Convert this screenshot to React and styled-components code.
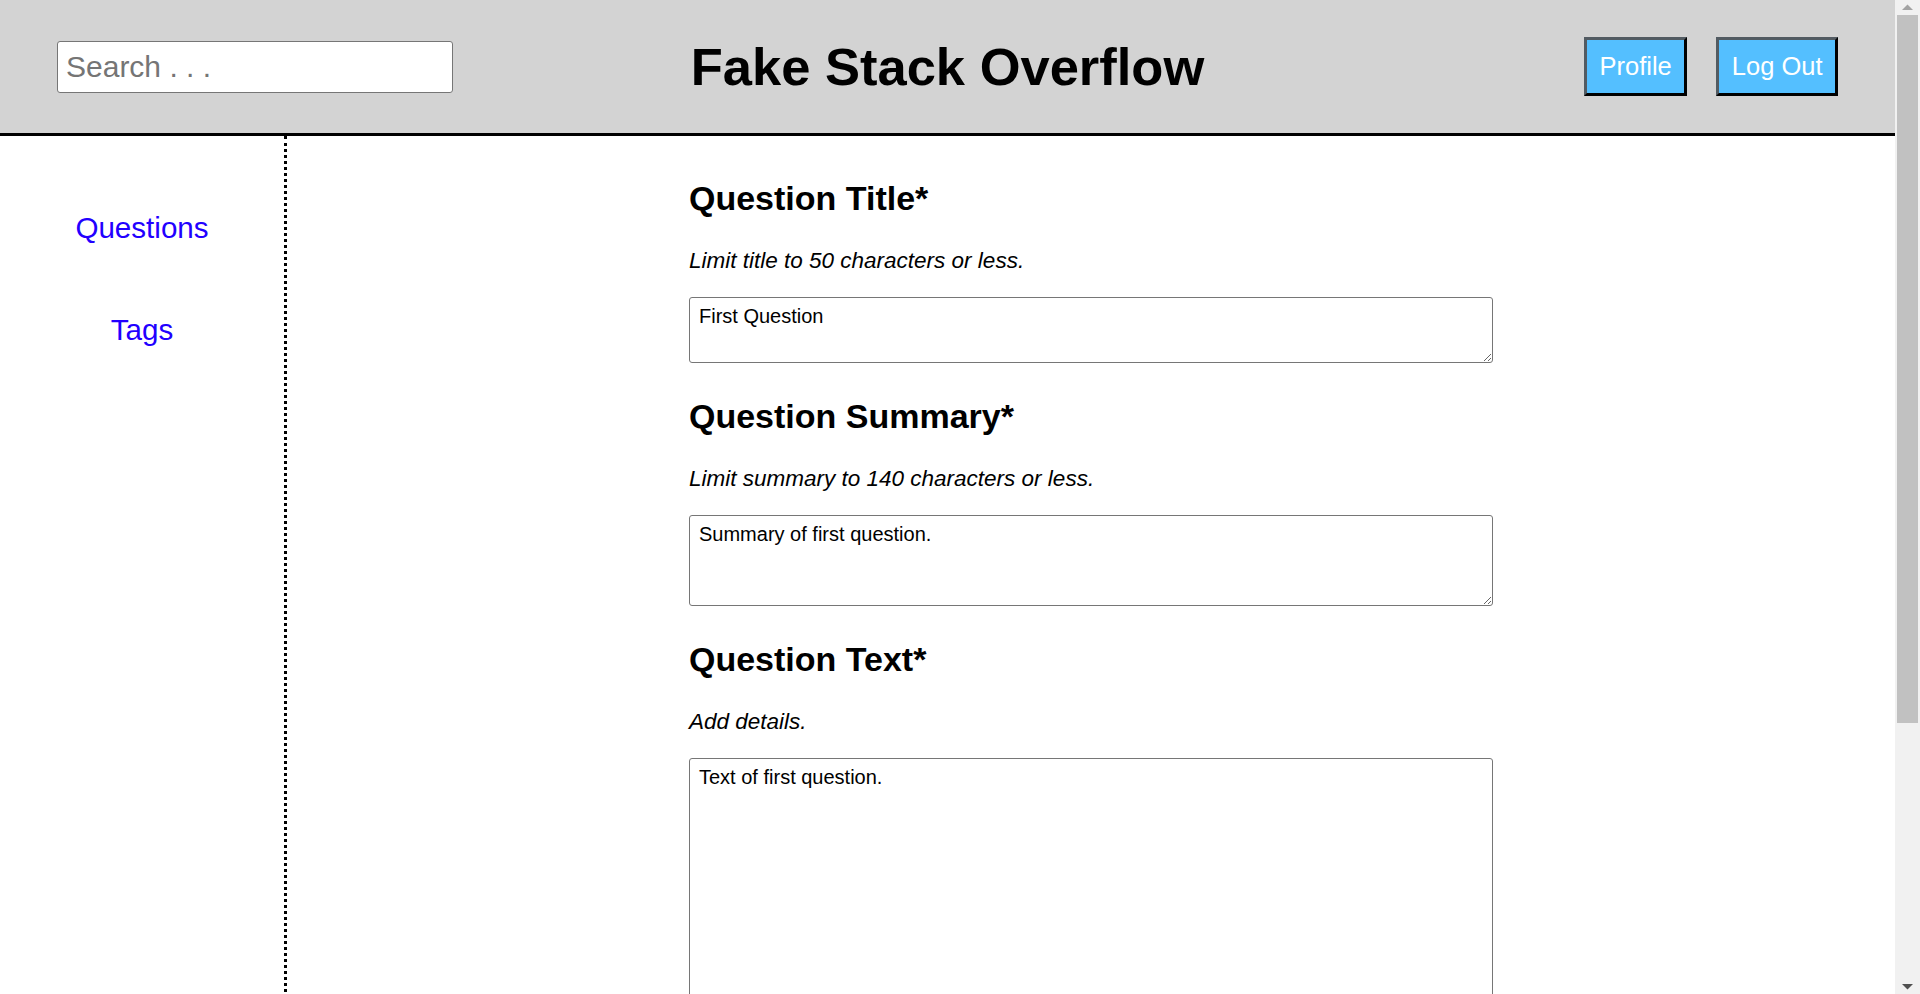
import React, { useState } from 'react';
import styled, { createGlobalStyle } from 'styled-components';

const GlobalStyle = createGlobalStyle`
  html, body {
    margin: 0;
    padding: 0;
  }
  body {
    font-family: "Liberation Sans", Arial, sans-serif;
    color: #000;
    background: #fff;
  }
  * {
    box-sizing: border-box;
  }
`;

const Page = styled.div`
  margin-right: 25px;
`;

const Header = styled.header`
  display: grid;
  grid-template-columns: 1fr 1fr 1fr;
  align-items: center;
  height: 136px;
  padding: 0 57px;
  background: #d3d3d3;
  border-bottom: 3px solid #000;
`;

const SearchInput = styled.input`
  width: 396px;
  height: 52px;
  padding: 0 8px;
  font-family: "Liberation Sans", Arial, sans-serif;
  font-size: 30px;
  color: #000;
  background: #fff;
  border: 1px solid #767676;
  border-radius: 3px;
  outline: none;

  &::placeholder {
    color: #757575;
  }
`;

const Title = styled.h1`
  margin: 0;
  text-align: center;
  font-size: 52.5px;
  font-weight: bold;
  white-space: nowrap;
`;

const Actions = styled.div`
  display: flex;
  justify-content: flex-end;
  gap: 29px;
`;

const HeaderButton = styled.button`
  padding: 12px 12.5px;
  font-family: "Liberation Sans", Arial, sans-serif;
  font-size: 25.5px;
  line-height: 1.15;
  color: #fff;
  background: #54bfff;
  border: 3px solid;
  border-color: #525b62 #000 #000 #525b62;
  cursor: pointer;
`;

const Body = styled.div`
  display: flex;
  min-height: calc(100vh - 136px);
`;

const Sidebar = styled.nav`
  flex: 0 0 287px;
  display: flex;
  flex-direction: column;
  align-items: center;
  gap: 68px;
  padding-top: 75px;
  border-right: 3px dotted #000;
`;

const NavLink = styled.a`
  font-size: 29.6px;
  line-height: 1.15;
  color: #2200ff;
  text-decoration: none;
  cursor: pointer;
`;

const Main = styled.main`
  flex: 1;
  padding: 43px 0 40px;
`;

const Form = styled.form`
  width: 50%;
  margin-left: 25%;
  display: flex;
  flex-direction: column;
`;

const Section = styled.div`
  display: flex;
  flex-direction: column;
  margin-bottom: 34px;
`;

const Label = styled.h2`
  margin: 0;
  font-size: 34px;
  line-height: 1.15;
  font-weight: bold;
`;

const Hint = styled.p`
  margin: 30px 0 23px;
  font-size: 22.5px;
  line-height: 1.15;
  font-style: italic;
`;

const Field = styled.textarea`
  display: block;
  width: 100%;
  height: ${(p) => p.$height}px;
  padding: 7px 9px;
  font-family: "Liberation Sans", Arial, sans-serif;
  font-size: 20px;
  line-height: 1.15;
  color: #000;
  background: #fff;
  border: 1px solid #767676;
  border-radius: 3px;
  outline: none;
`;

const SubmitRow = styled.div`
  display: flex;
  align-items: center;
  justify-content: space-between;
`;

const SubmitButton = styled(HeaderButton)`
  background: #0281e8;
`;

const Mandatory = styled.span`
  font-size: 22.5px;
  color: #d00;
`;

/* the page's scrollbar, drawn as in the screenshot */
const Scrollbar = styled.div`
  position: fixed;
  top: 0;
  right: 0;
  bottom: 0;
  width: 25px;
  display: flex;
  flex-direction: column;
  align-items: center;
  background: #f1f1f1;
`;

const ScrollArrow = styled.svg`
  flex: 0 0 auto;
  width: 25px;
  height: 15px;
  fill: ${(p) => p.$color};
`;

const ScrollThumb = styled.div`
  width: 21px;
  height: 708px;
  background: #c1c1c1;
`;

const ScrollSpacer = styled.div`
  flex: 1;
`;

const sections = [
  {
    key: 'title',
    label: 'Question Title*',
    hint: 'Limit title to 50 characters or less.',
    value: 'First Question',
    height: 66,
  },
  {
    key: 'summary',
    label: 'Question Summary*',
    hint: 'Limit summary to 140 characters or less.',
    value: 'Summary of first question.',
    height: 91,
  },
  {
    key: 'text',
    label: 'Question Text*',
    hint: 'Add details.',
    value: 'Text of first question.',
    height: 250,
  },
  {
    key: 'tags',
    label: 'Tags*',
    hint: 'Add keywords separated by whitespace.',
    value: 'react javascript',
    height: 66,
  },
];

export default function App() {
  const [values, setValues] = useState(
    Object.fromEntries(sections.map((s) => [s.key, s.value]))
  );

  const handleChange = (key) => (event) => {
    setValues((prev) => ({ ...prev, [key]: event.target.value }));
  };

  return (
    <>
      <GlobalStyle />
      <Page>
        <Header>
          <div>
            <SearchInput type="text" placeholder="Search . . ." />
          </div>
          <Title>Fake Stack Overflow</Title>
          <Actions>
            <HeaderButton type="button">Profile</HeaderButton>
            <HeaderButton type="button">Log Out</HeaderButton>
          </Actions>
        </Header>
        <Body>
          <Sidebar>
            <NavLink>Questions</NavLink>
            <NavLink>Tags</NavLink>
          </Sidebar>
          <Main>
            <Form onSubmit={(e) => e.preventDefault()}>
              {sections.map((s) => (
                <Section key={s.key}>
                  <Label>{s.label}</Label>
                  <Hint>{s.hint}</Hint>
                  <Field
                    $height={s.height}
                    value={values[s.key]}
                    onChange={handleChange(s.key)}
                  />
                </Section>
              ))}
              <SubmitRow>
                <SubmitButton type="submit">Post Question</SubmitButton>
                <Mandatory>* indicates mandatory fields</Mandatory>
              </SubmitRow>
            </Form>
          </Main>
        </Body>
      </Page>
      <Scrollbar>
        <ScrollArrow $color="#a3a3a3" viewBox="0 0 25 15">
          <polygon points="7,10 12.5,4.5 18,10" />
        </ScrollArrow>
        <ScrollThumb />
        <ScrollSpacer />
        <ScrollArrow $color="#505050" viewBox="0 0 25 15">
          <polygon points="7,5 12.5,10.5 18,5" />
        </ScrollArrow>
      </Scrollbar>
    </>
  );
}
